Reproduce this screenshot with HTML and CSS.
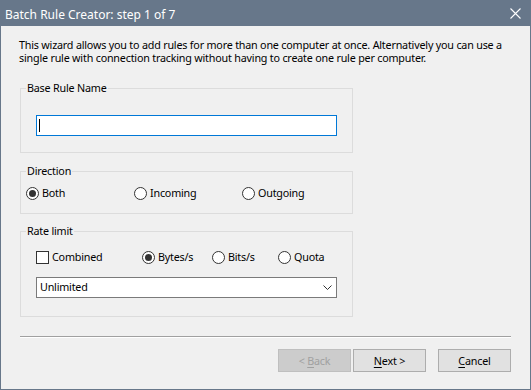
FILE: index.html
```html
<!DOCTYPE html>
<html lang="en">
<head>
    <meta charset="UTF-8">
    <title>Batch Rule Creator</title>
    <link rel="stylesheet" href="styles.css">
</head>
<body>
    <div class="window">
        <div class="titlebar">
            <span class="title">Batch Rule Creator: step 1 of 7</span>
            <svg class="close" width="11" height="11" viewBox="0 0 11 11">
                <path d="M0.5 0.5 L10.5 10.5 M10.5 0.5 L0.5 10.5" stroke="#ffffff" stroke-width="1.1" fill="none"/>
            </svg>
        </div>

        <div class="content">
            <p class="intro">This wizard allows you to add rules for more than one computer at once. Alternatively you can use a<br>single rule with connection tracking without having to create one rule per computer.</p>

            <fieldset class="group group-name">
                <legend>Base Rule Name</legend>
                <div class="text-input"><span class="caret"></span></div>
            </fieldset>

            <fieldset class="group group-direction">
                <legend>Direction</legend>
                <div class="option-row">
                    <label class="option"><span class="radio checked"></span>Both</label>
                    <label class="option"><span class="radio"></span>Incoming</label>
                    <label class="option"><span class="radio"></span>Outgoing</label>
                </div>
            </fieldset>

            <fieldset class="group group-rate">
                <legend>Rate limit</legend>
                <div class="rate-row">
                    <label class="option opt-combined"><span class="checkbox"></span>Combined</label>
                    <label class="option opt-bytes"><span class="radio checked"></span>Bytes/s</label>
                    <label class="option opt-bits"><span class="radio"></span>Bits/s</label>
                    <label class="option"><span class="radio"></span>Quota</label>
                </div>
                <div class="select">
                    <span>Unlimited</span>
                    <svg width="9" height="5" viewBox="0 0 9 5">
                        <path d="M0.5 0.5 L4.5 4.5 L8.5 0.5" stroke="#333333" stroke-width="1" fill="none"/>
                    </svg>
                </div>
            </fieldset>
        </div>

        <div class="footer">
            <div class="separator"></div>
            <div class="buttons">
                <button class="btn" disabled>&lt; <u>B</u>ack</button>
                <button class="btn"><u>N</u>ext &gt;</button>
                <button class="btn btn-cancel"><u>C</u>ancel</button>
            </div>
        </div>
    </div>
</body>
</html>
```

FILE: styles.css
```css
:root {
    --frame-color: #67778a;
    --face-color: #f0f0f0;
    --group-border: #dcdcdc;
    --text-color: #000000;
    --control-border: #333333;
}

* {
    margin: 0;
    padding: 0;
    box-sizing: border-box;
}

body {
    font-family: 'Noto Sans', 'Open Sans', sans-serif;
    font-size: 10.75px;
    letter-spacing: -0.2px;
    line-height: 15px;
    color: var(--text-color);
    background: var(--face-color);
}

.window {
    width: 531px;
    height: 390px;
    display: flex;
    flex-direction: column;
    background: var(--face-color);
    border: 1px solid var(--frame-color);
    border-top: none;
}

.titlebar {
    height: 26px;
    flex-shrink: 0;
    margin: 0 -1px;
    padding: 0 10px 0 5px;
    background: var(--frame-color);
    color: #ffffff;
    display: flex;
    align-items: center;
    justify-content: space-between;
    font-size: 12px;
    letter-spacing: 0;
}

.title {
    padding-top: 2px;
}

.close {
    margin-top: 1px;
}

.content {
    padding: 13px 18px 0 18px;
    flex: 1;
    min-height: 0;
}

.intro {
    white-space: nowrap;
    line-height: 13px;
    margin-bottom: 16px;
}

.group {
    width: 333px;
    margin-left: 1px;
    border: 1px solid var(--group-border);
    padding: 0;
}

.group legend {
    margin-left: 5px;
    padding: 0 1px;
}

.group-name {
    height: 72px;
}

.text-input {
    margin: 19px 0 0 15px;
    width: 301px;
    height: 21px;
    background: #ffffff;
    border: 1px solid #0078d7;
    padding: 3px 0 0 2px;
}

.caret {
    display: block;
    width: 1px;
    height: 13px;
    background: #000000;
}

.group-direction {
    margin-top: 11px;
    height: 50px;
}

.option-row {
    display: grid;
    grid-template-columns: 108px 108px 108px;
    padding: 7px 0 0 5px;
}

.option {
    display: flex;
    align-items: center;
    gap: 3px;
}

.radio {
    width: 13px;
    height: 13px;
    border: 1px solid var(--control-border);
    border-radius: 50%;
    background: #ffffff;
    display: flex;
    align-items: center;
    justify-content: center;
}

.radio.checked::after {
    content: '';
    width: 7px;
    height: 7px;
    border-radius: 50%;
    background: var(--control-border);
}

.checkbox {
    width: 13px;
    height: 13px;
    border: 1px solid var(--control-border);
    background: #ffffff;
}

.group-rate {
    margin-top: 10px;
    height: 93px;
}

.rate-row {
    display: flex;
    padding: 11px 0 0 15px;
}

.opt-combined {
    width: 106px;
}

.opt-bytes {
    width: 70px;
}

.opt-bits {
    width: 66px;
}

.select {
    margin: 12px 0 0 15px;
    width: 301px;
    height: 21px;
    background: #ffffff;
    border: 1px solid #7a7a7a;
    display: flex;
    align-items: center;
    justify-content: space-between;
    padding: 0 4px 0 3px;
}

.footer {
    flex-shrink: 0;
    padding: 0 19px 17px 19px;
}

.separator {
    height: 2px;
    border-top: 1px solid #a0a0a0;
    border-bottom: 1px solid #ffffff;
}

.buttons {
    display: flex;
    justify-content: flex-end;
    gap: 2px;
    margin-top: 11px;
}

.btn {
    width: 73px;
    height: 23px;
    font-family: inherit;
    font-size: 10.75px;
    letter-spacing: -0.2px;
    color: var(--text-color);
    background: #e1e1e1;
    border: 1px solid #adadad;
}

.btn u {
    text-decoration-thickness: 1px;
    text-underline-offset: 2px;
}

.btn:disabled {
    background: #cccccc;
    border-color: #bfbfbf;
    color: #a0a0a0;
}

.btn-cancel {
    margin-left: 10px;
}
```
